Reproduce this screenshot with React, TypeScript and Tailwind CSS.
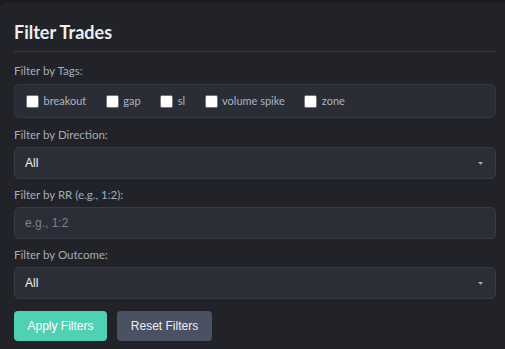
import React from "react";

const tags = ["breakout", "gap", "sl", "volume spike", "zone"];

function Arrow() {
  return (
    <svg
      width="5"
      height="3"
      viewBox="0 0 5 3"
      className="pointer-events-none absolute right-[13px] top-[15px]"
    >
      <path d="M0 0H5L2.5 3Z" fill="#a3a8b1" />
    </svg>
  );
}

function Select() {
  return (
    <div className="relative">
      <select className="h-[32px] w-full appearance-none rounded-[5px] border border-[#373b44] bg-[#2b2e36] px-[10px] text-[12px] text-[#f0f1f3] outline-none [font-family:'Liberation_Sans',Arial,sans-serif]">
        <option>All</option>
      </select>
      <Arrow />
    </div>
  );
}

function Label({ children }: { children: React.ReactNode }) {
  return (
    <div className="mb-[4px] h-[16px] text-[11.5px] leading-[16px] text-[#a3adbb]">
      {children}
    </div>
  );
}

export default function App() {
  return (
    <div className="min-h-[349px] bg-[#1a1c20] pt-[3px] [font-family:Lato,'Noto_Sans',sans-serif]">
      <div className="min-h-[346px] rounded-tl-[6px] bg-[#212328] px-[14px] pr-[9px] pt-[17px]">
        <h2 className="h-[24px] text-[18px] font-bold leading-[24px] text-[#eceef1]">
          Filter Trades
        </h2>
        <div className="mt-[7px] h-px bg-[#3a3d44]" />
        <div className="mt-[11px]">
          <Label>Filter by Tags:</Label>
          <div className="mt-[5px] flex h-[34px] items-center gap-[19.5px] rounded-[5px] border border-[#33373f] bg-[#2a2d35] px-[11px]">
            {tags.map((t) => (
              <label key={t} className="flex items-center gap-[4.5px] text-[11px] text-[#a9b4c6]">
                <span className="h-[13px] w-[13px] rounded-[2px] border border-[#767676] bg-white" />
                {t}
              </label>
            ))}
          </div>
        </div>
        <div className="mt-[9px]">
          <Label>Filter by Direction:</Label>
          <Select />
        </div>
        <div className="mt-[8px]">
          <Label>Filter by RR (e.g., 1:2):</Label>
          <input
            placeholder="e.g., 1:2"
            className="h-[32px] w-full rounded-[5px] border border-[#373b44] bg-[#2b2e36] px-[10px] text-[12px] text-[#f0f1f3] outline-none placeholder:text-[#7c818b] [font-family:'Liberation_Sans',Arial,sans-serif]"
          />
        </div>
        <div className="mt-[8px]">
          <Label>Filter by Outcome:</Label>
          <Select />
        </div>
        <div className="mt-[12px] flex gap-[10px] [font-family:'Liberation_Sans',Arial,sans-serif]">
          <button className="h-[30px] w-[93px] rounded-[4px] bg-[#4fd1b4] text-[12px] text-white">
            Apply Filters
          </button>
          <button className="h-[30px] w-[95px] rounded-[4px] bg-[#4a5163] text-[12px] text-[#eceef2]">
            Reset Filters
          </button>
        </div>
      </div>
    </div>
  );
}
